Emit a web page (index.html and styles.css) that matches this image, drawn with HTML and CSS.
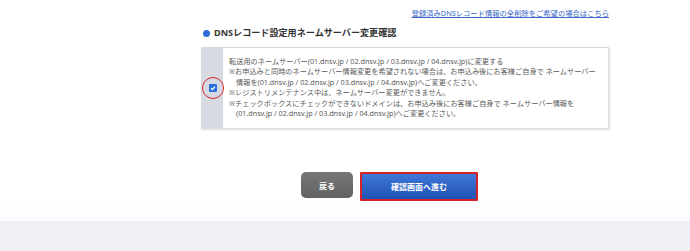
FILE: index.html
```html
<!DOCTYPE html>
<html lang="ja">
<head>
  <meta charset="UTF-8">
  <meta name="viewport" content="width=device-width, initial-scale=1.0">
  <title>DNSレコード設定用ネームサーバー変更確認</title>
  <link rel="stylesheet" href="styles.css">
</head>
<body>
  <div class="page">
    <div class="inner">
      <div class="top-link">
        <a href="#">登録済みDNSレコード情報の全削除をご希望の場合はこちら</a>
      </div>

      <h2 class="section-title"><span class="dot"></span>DNSレコード設定用ネームサーバー変更確認</h2>

      <div class="confirm-box">
        <div class="check-col">
          <span class="check">
            <svg width="8" height="8" viewBox="0 0 8 8">
              <rect width="8" height="8" rx="1" fill="#2b6fdc"/>
              <path d="M2 4.2 L3.4 5.6 L6 2.6" fill="none" stroke="#fff" stroke-width="1.3"/>
            </svg>
          </span>
          <span class="mark-circle"></span>
        </div>
        <div class="text-col">
          <p>転送用のネームサーバー(01.dnsv.jp / 02.dnsv.jp / 03.dnsv.jp / 04.dnsv.jp)に変更する</p>
          <p class="note">※お申込みと同時のネームサーバー情報変更を希望されない場合は、お申込み後にお客様ご自身で ネームサーバー<br>情報を(01.dnsv.jp / 02.dnsv.jp / 03.dnsv.jp / 04.dnsv.jp)へご変更ください。</p>
          <p class="note">※レジストリメンテナンス中は、ネームサーバー変更ができません。</p>
          <p class="note">※チェックボックスにチェックができないドメインは、お申込み後にお客様ご自身で ネームサーバー情報を<br>(01.dnsv.jp / 02.dnsv.jp / 03.dnsv.jp / 04.dnsv.jp)へご変更ください。</p>
        </div>
      </div>

      <div class="buttons">
        <button class="btn-back">戻る</button>
        <button class="btn-next">確認画面へ進む</button>
      </div>
    </div>
  </div>
  <div class="footer-band"></div>
</body>
</html>
```

FILE: styles.css
```css
body {
  margin: 0;
  font-family: "Noto Sans", "Noto Sans CJK JP", sans-serif;
  background: #ffffff;
  color: #555;
}

.page {
  height: 221px;
  background: linear-gradient(to bottom, #ffffff 92%, #fafbfc);
}

.inner {
  width: 408px;
  margin-left: 201px;
}

.top-link {
  text-align: right;
  padding-top: 7px;
  font-size: 7.3px;
  line-height: 12px;
}

.top-link a {
  color: #3a68c8;
}

.section-title {
  margin: 7px 0 0 2px;
  font-size: 9.1px;
  line-height: 14px;
  color: #333;
  display: flex;
  align-items: center;
}

.dot {
  width: 7px;
  height: 7px;
  border-radius: 50%;
  background: #2e6bd4;
  margin-right: 4px;
}

.confirm-box {
  margin-top: 7px;
  display: flex;
  border: 1px solid #dcdcdc;
  box-shadow: 1px 1px 2px rgba(0, 0, 0, 0.12);
  height: 80px;
}

.check-col {
  position: relative;
  flex-shrink: 0;
  width: 21px;
  background: #d6dae3;
  display: flex;
  align-items: center;
  justify-content: center;
}

.check {
  display: flex;
}

.mark-circle {
  position: absolute;
  left: 0;
  top: calc(50% - 11px);
  width: 22px;
  height: 22px;
  border: 1.5px solid #d8262e;
  border-radius: 50%;
  box-sizing: border-box;
}

.text-col {
  padding: 8px 2px 0 6px;
  font-size: 7.2px;
  line-height: 10.4px;
  color: #5a5a5a;
  white-space: nowrap;
}

.text-col p {
  margin: 0;
}

.text-col p.note {
  padding-left: 7px;
  text-indent: -7px;
}

.buttons {
  display: flex;
  align-items: flex-start;
  gap: 7px;
  margin-top: 43px;
  padding-left: 100px;
}

.buttons button {
  font-family: inherit;
  font-weight: bold;
  font-size: 8px;
  color: #fff;
  cursor: pointer;
}

.btn-back {
  width: 52px;
  height: 26px;
  border: none;
  border-radius: 5px;
  background: linear-gradient(to bottom, #777, #626262);
}

.btn-next {
  width: 118px;
  height: 29px;
  border: 2px solid #d3222c;
  border-radius: 1px;
  background: linear-gradient(to bottom, #3f77d8, #1f52b3);
}

.footer-band {
  height: 30px;
  background: #eef0f5;
}
```
